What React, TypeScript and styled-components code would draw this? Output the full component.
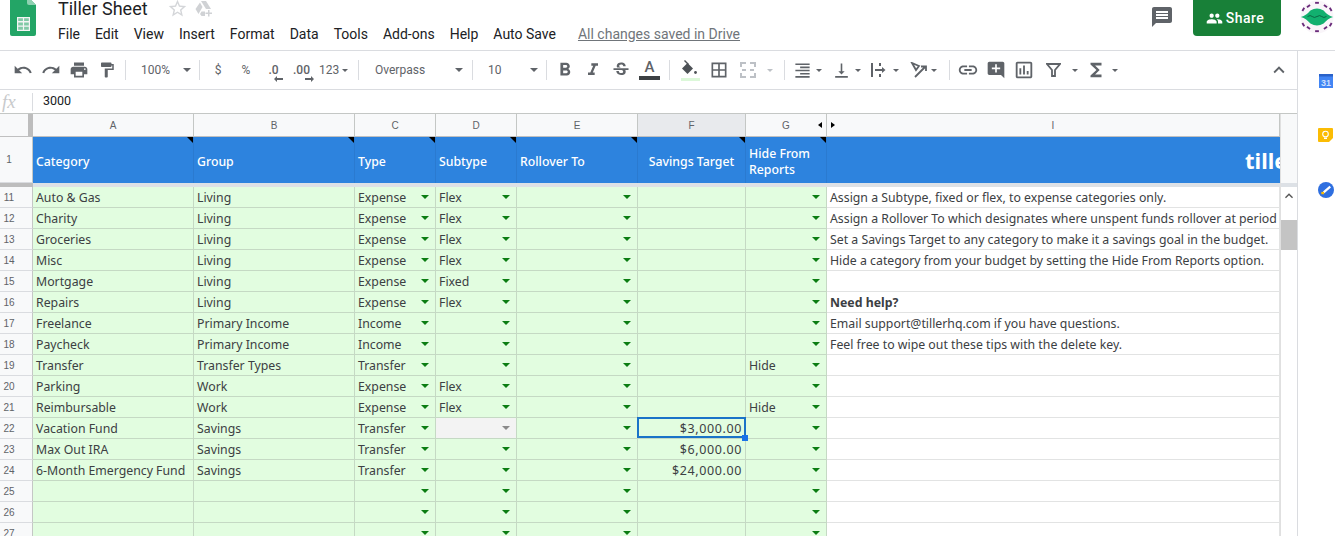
import React from "react";
import styled, { createGlobalStyle } from "styled-components";
import {
  MdUndo, MdRedo, MdPrint, MdFormatPaint, MdFormatBold, MdFormatItalic, MdStrikethroughS,
  MdBorderAll, MdLink, MdAddComment, MdFunctions, MdKeyboardArrowUp, MdMessage, MdOutlineAssessment,
  MdPeople, MdStarBorder, MdFormatAlignRight, MdVerticalAlignBottom,
} from "react-icons/md";

const Global = createGlobalStyle`
  html, body { margin: 0; padding: 0; background: #fff; }
  body { font-family: "Roboto", "Liberation Sans", sans-serif; color: #3c4043; }
`;

const COLS = "33px 161px 161px 81px 81px 121px 108px 81px 453px";
const CELL_FONT = `"Noto Sans", "Open Sans", sans-serif`;

type RowData = {
  n: number; cat?: string; group?: string; type?: string; sub?: string; target?: string; hide?: string;
  tip?: string; bold?: boolean; selected?: boolean;
};

const rows: RowData[] = [
  { n: 11, cat: "Auto & Gas", group: "Living", type: "Expense", sub: "Flex", tip: "Assign a Subtype, fixed or flex, to expense categories only." },
  { n: 12, cat: "Charity", group: "Living", type: "Expense", sub: "Flex", tip: "Assign a Rollover To which designates where unspent funds rollover at period end." },
  { n: 13, cat: "Groceries", group: "Living", type: "Expense", sub: "Flex", tip: "Set a Savings Target to any category to make it a savings goal in the budget." },
  { n: 14, cat: "Misc", group: "Living", type: "Expense", sub: "Flex", tip: "Hide a category from your budget by setting the Hide From Reports option." },
  { n: 15, cat: "Mortgage", group: "Living", type: "Expense", sub: "Fixed" },
  { n: 16, cat: "Repairs", group: "Living", type: "Expense", sub: "Flex", tip: "Need help?", bold: true },
  { n: 17, cat: "Freelance", group: "Primary Income", type: "Income", tip: "Email support@tillerhq.com if you have questions." },
  { n: 18, cat: "Paycheck", group: "Primary Income", type: "Income", tip: "Feel free to wipe out these tips with the delete key." },
  { n: 19, cat: "Transfer", group: "Transfer Types", type: "Transfer", hide: "Hide" },
  { n: 20, cat: "Parking", group: "Work", type: "Expense", sub: "Flex" },
  { n: 21, cat: "Reimbursable", group: "Work", type: "Expense", sub: "Flex", hide: "Hide" },
  { n: 22, cat: "Vacation Fund", group: "Savings", type: "Transfer", target: "$3,000.00", selected: true },
  { n: 23, cat: "Max Out IRA", group: "Savings", type: "Transfer", target: "$6,000.00" },
  { n: 24, cat: "6-Month Emergency Fund", group: "Savings", type: "Transfer", target: "$24,000.00" },
  { n: 25 },
  { n: 26 },
  { n: 27 },
];

const Page = styled.div`
  width: 1335px;
  height: 536px;
  overflow: hidden;
  display: flex;
  flex-direction: column;
`;

const TopBar = styled.header`
  height: 50px;
  flex: none;
  display: flex;
  align-items: flex-start;
  border-bottom: 1px solid #dadce0;
`;

const LogoWrap = styled.div`
  width: 58px;
  padding-left: 10px;
  box-sizing: border-box;
  flex: none;
  line-height: 0;
`;

const TitleBlock = styled.div`
  flex: 1;
  display: flex;
  flex-direction: column;
`;

const TitleRow = styled.div`
  height: 17px;
  display: flex;
  align-items: center;
  margin-bottom: 8px;
`;

const Title = styled.span`
  font-size: 18px;
  line-height: 17px;
  color: #202124;
  width: 109px;
`;

const TitleIcon = styled.span`
  color: #d4d6d9;
  width: 28px;
  display: flex;
  line-height: 0;
`;

const MenuRow = styled.nav`
  display: flex;
  align-items: center;
  height: 18px;
  font-size: 14px;
  color: #202124;
  gap: 15px;
`;

const SavedLink = styled.a`
  margin-left: 7px;
  color: #70757a;
  text-decoration: underline;
`;

const RightTools = styled.div`
  display: flex;
  align-items: flex-start;
  flex: none;
  padding-right: 1px;
`;

const CommentBtn = styled.span`
  color: #5f6368;
  display: flex;
  margin: 5px 19px 0 0;
`;

const ShareBtn = styled.div`
  width: 88px;
  height: 36px;
  box-sizing: border-box;
  padding-right: 4px;
  background: #188038;
  color: #fff;
  border-radius: 0 0 4px 4px;
  display: flex;
  align-items: center;
  justify-content: center;
  gap: 3px;
  font-size: 14px;
  font-weight: 500;
  letter-spacing: 0.5px;
  margin-right: 19px;
`;

const Avatar = styled.div`
  width: 34px;
  height: 36px;
  line-height: 0;
`;

const Body = styled.div`
  flex: 1;
  display: flex;
  min-height: 0;
`;

const Main = styled.main`
  width: 1297px;
  flex: none;
  display: flex;
  flex-direction: column;
`;

const SidePanel = styled.aside`
  flex: 1;
  border-left: 1px solid #dadce0;
  padding: 23px 0 0 20px;
  display: flex;
  flex-direction: column;
  gap: 40px;
`;

const Toolbar = styled.div`
  height: 38px;
  flex: none;
  display: flex;
  align-items: center;
  padding-left: 9px;
  border-bottom: 1px solid #dadce0;
  color: #5f6368;
`;

const ToolBtn = styled.span<{ $w?: number; $off?: boolean }>`
  width: ${(p) => p.$w ?? 28}px;
  height: 28px;
  flex: none;
  display: flex;
  align-items: center;
  justify-content: center;
  font-size: 12px;
  color: ${(p) => (p.$off ? "#bdc1c6" : "#5f6368")};
`;

const Sep = styled.span<{ $l?: number; $r?: number }>`
  width: 1px;
  height: 20px;
  background: #dadce0;
  flex: none;
  margin: 0 ${(p) => p.$r ?? 4}px 0 ${(p) => p.$l ?? 4}px;
`;

const Caret = styled.span<{ $off?: boolean }>`
  width: 0;
  height: 0;
  flex: none;
  border-left: 4px solid transparent;
  border-right: 4px solid transparent;
  border-top: 4px solid ${(p) => (p.$off ? "#bdc1c6" : "#5f6368")};
`;

const SmallCaret = styled(Caret)`
  border-left-width: 3.5px;
  border-right-width: 3.5px;
  border-top-width: 3.5px;
`;

const SelectBox = styled.span<{ $w: number; $l: number; $r: number }>`
  width: ${(p) => p.$w}px;
  padding: 0 ${(p) => p.$r}px 0 ${(p) => p.$l}px;
  box-sizing: border-box;
  flex: none;
  display: flex;
  align-items: center;
  justify-content: space-between;
  font-size: 12px;
  color: #5f6368;
`;

const IconMenu = styled.span<{ $gap: number; $pad: number }>`
  display: flex;
  align-items: center;
  gap: ${(p) => p.$gap}px;
  padding-left: ${(p) => p.$pad}px;
  box-sizing: border-box;
  width: 39px;
  flex: none;
`;

const Decimal = styled.span`
  position: relative;
  font-size: 12px;
  font-weight: 500;
`;

const DecimalArrow = styled.svg`
  position: absolute;
  right: -4px;
  bottom: -5px;
`;

const ColorBar = styled.span`
  display: flex;
  flex-direction: column;
  align-items: center;
  font-size: 15px;
  line-height: 14px;
  font-weight: 500;
  &::after {
    content: "";
    width: 21px;
    height: 4px;
    margin-top: 2px;
    background: #3c4043;
  }
`;

const Spacer = styled.span`
  flex: 1;
`;

const FormulaBar = styled.div`
  height: 23px;
  flex: none;
  display: flex;
  align-items: center;
  border-bottom: 1px solid #c4c7c5;
`;

const Fx = styled.span`
  width: 32px;
  padding-left: 2px;
  box-sizing: border-box;
  font-family: "Liberation Serif", serif;
  font-style: italic;
  font-size: 19px;
  color: #c8cacc;
`;

const FormulaValue = styled.span`
  height: 18px;
  box-sizing: border-box;
  padding: 0 0 2px 10px;
  border-left: 1px solid #dadce0;
  font-size: 12.5px;
  line-height: 16px;
  color: #202124;
`;

const SheetArea = styled.div`
  flex: 1;
  display: flex;
  min-height: 0;
`;

const Grid = styled.div`
  width: 1280px;
  flex: none;
  overflow: hidden;
  font-family: ${CELL_FONT};
`;

const Row = styled.div`
  display: grid;
  grid-template-columns: ${COLS};
`;

const ColLabel = styled.div<{ $active?: boolean }>`
  height: 23px;
  box-sizing: border-box;
  position: relative;
  display: flex;
  align-items: center;
  justify-content: center;
  font-family: "Liberation Sans", sans-serif;
  font-size: 10px;
  color: #5f6368;
  background: ${(p) => (p.$active ? "#e8eaed" : "#f8f9fa")};
  border-right: 1px solid #c4c7c5;
  border-bottom: 1px solid #c0c0c0;
`;

const Corner = styled.div`
  height: 23px;
  box-sizing: border-box;
  background: #f8f9fa;
  border-right: 5px solid #bdbdbd;
  border-bottom: 1px solid #c0c0c0;
`;

const HiddenArrow = styled.span<{ $dir: "left" | "right" }>`
  position: absolute;
  top: 8px;
  ${(p) => (p.$dir === "left" ? "right: 4px;" : "left: 4px;")}
  width: 0;
  height: 0;
  border-top: 3.5px solid transparent;
  border-bottom: 3.5px solid transparent;
  ${(p) => (p.$dir === "left" ? "border-right: 4px solid #000;" : "border-left: 4px solid #000;")}
`;

const RowNum = styled.div<{ $h: number }>`
  height: ${(p) => p.$h}px;
  box-sizing: border-box;
  background: #f8f9fa;
  border-right: 1px solid #c4c7c5;
  border-bottom: 1px solid #dadce0;
  padding-right: 14px;
  display: flex;
  align-items: center;
  justify-content: center;
  font-family: "Liberation Sans", sans-serif;
  font-size: 10px;
  color: #5f6368;
`;

const HeadCell = styled.div<{ $note?: boolean }>`
  height: 46px;
  box-sizing: border-box;
  position: relative;
  background: #2d83de;
  border-right: 1px solid #2a7ad0;
  padding: 3px 3px 0;
  display: flex;
  align-items: center;
  color: #fff;
  font-size: 12.3px;
  font-weight: 500;
  line-height: 16px;
  overflow: hidden;
  &::after {
    content: "";
    display: ${(p) => (p.$note ? "block" : "none")};
    position: absolute;
    top: 0;
    right: 0;
    border-top: 6px solid #000;
    border-left: 6px solid transparent;
  }
`;

const CenterHead = styled(HeadCell)`
  justify-content: center;
`;

const Brand = styled(HeadCell)`
  padding: 0 0 0 418px;
  font-size: 22px;
  font-weight: 700;
  white-space: nowrap;
  border-right: 0;
`;

const FreezeBar = styled.div`
  height: 4px;
  background: #dde1e6;
  display: grid;
  grid-template-columns: 33px 1fr;
  &::before {
    content: "";
    background: #bdbdbd;
  }
`;

const Cell = styled.div<{ $tone?: "green" | "gray" | "white"; $bold?: boolean }>`
  height: 21px;
  box-sizing: border-box;
  position: relative;
  padding: 0 3px;
  display: flex;
  align-items: center;
  justify-content: space-between;
  overflow: hidden;
  white-space: nowrap;
  font-size: 12.3px;
  font-weight: ${(p) => (p.$bold ? 700 : 400)};
  color: #3c4043;
  background: ${(p) => (p.$tone === "gray" ? "#f3f3f3" : p.$tone === "white" ? "#fff" : "#e2fde0")};
  border-right: 1px solid ${(p) => (p.$tone === "white" ? "#e2e3e3" : "#c5d9c4")};
  border-bottom: 1px solid ${(p) => (p.$tone === "white" ? "#e2e3e3" : "#c5d9c4")};
`;

const AmountCell = styled(Cell)`
  justify-content: flex-end;
  letter-spacing: 0.6px;
  font-size: 12.5px;
`;

const SelectedCell = styled(AmountCell)`
  overflow: visible;
  &::before {
    content: "";
    position: absolute;
    inset: -1px -1px 0 -1px;
    border: 2px solid #1a73c8;
  }
  &::after {
    content: "";
    position: absolute;
    right: -3px;
    bottom: -3px;
    width: 6px;
    height: 6px;
    background: #1a73e8;
    z-index: 1;
  }
`;

const DropArrow = styled.span<{ $gray?: boolean }>`
  width: 0;
  height: 0;
  flex: none;
  margin: 0 3px 0 auto;
  border-left: 4px solid transparent;
  border-right: 4px solid transparent;
  border-top: 4px solid ${(p) => (p.$gray ? "#8a8a8a" : "#0b7d12")};
`;

const Gutter = styled.div`
  flex: 1;
  display: flex;
  flex-direction: column;
  border-left: 1px solid #e0e0e0;
  box-sizing: border-box;
`;

const GutterTop = styled.div`
  height: 69px;
  background: #f8f9fa;
  flex: none;
`;

const GutterFreeze = styled.div`
  height: 4px;
  background: #dde1e6;
  flex: none;
`;

const ScrollUp = styled.div`
  height: 33px;
  flex: none;
  display: flex;
  align-items: center;
  justify-content: center;
  padding-bottom: 15px;
  box-sizing: border-box;
  color: #555;
`;

const ScrollThumb = styled.div`
  height: 30px;
  background: #c4c4c4;
  flex: none;
`;

function GoogleSheetsLogo() {
  return (
    <svg width="26" height="36" viewBox="0 0 26 36">
      <path d="M2 -4h15l9 9v29a2 2 0 0 1-2 2H2a2 2 0 0 1-2-2V-2a2 2 0 0 1 2-2z" fill="#23a566" />
      <path d="M17 -4l9 9h-7a2 2 0 0 1-2-2z" fill="#8ed1b1" />
      <rect x="7" y="17" width="13" height="14" fill="#f4f4f4" />
      <path d="M8.200 18.200h4.700v2.900H8.200z M14.100 18.200h4.700v2.900h-4.700z M8.200 22.500h4.700v2.900H8.200z M14.100 22.500h4.700v2.900h-4.700z M8.200 26.800h4.700v2.900H8.200z M14.100 26.800h4.700v2.900h-4.700z" fill="#23a566" opacity="0.55" />
    </svg>
  );
}

function DriveAdd() {
  return (
    <svg width="18" height="18" viewBox="0 0 18 18" fill="#d0d2d5">
      <path d="M6 1h5l5 8h-5z" />
      <path d="M5 2.500l2.500 4.500-4 7-3-5z" />
      <path d="M5 14l1.500-2.500H10V16H6.500z" />
      <path d="M13 10h1.500v2.500H17V14h-2.500v2.500H13V14h-2.500v-1.500H13z" />
    </svg>
  );
}

function PaintFill() {
  return (
    <svg width="22" height="24" viewBox="0 0 22 24">
      <path d="M8.500 5L14 10.500 8.500 16 3 10.500z" fill="#4d5156" />
      <path d="M5.500 2.500L9.500 6.500" stroke="#4d5156" strokeWidth="1.500" />
      <circle cx="16.500" cy="14.500" r="1.400" fill="#4d5156" />
      <rect x="2" y="20" width="19" height="3" fill="#dcf8d9" />
    </svg>
  );
}

function MergeIcon() {
  return (
    <svg width="16" height="16" viewBox="0 0 16 16" fill="none" stroke="#bdc1c6" strokeWidth="2">
      <path d="M1 5V1h5 M10 1h5v4 M1 11v4h5 M10 15h5v-4 M2 8h4 M10 8h4" />
    </svg>
  );
}

function WrapIcon() {
  return (
    <svg width="18" height="16" viewBox="0 0 18 16" fill="none" stroke="#5f6368" strokeWidth="2">
      <path d="M1 1v14 M9 1v3 M9 12v3 M4 8h9" />
      <path d="M11 5l3.500 3-3.500 3z" fill="#5f6368" stroke="none" />
    </svg>
  );
}

function RotateIcon() {
  return (
    <svg width="18" height="16" viewBox="0 0 18 16" fill="none" stroke="#5f6368" strokeWidth="1.800">
      <path d="M9 4L2 1l4 7z" />
      <path d="M5 15L15 5 M11 4.500h5V9" />
    </svg>
  );
}

function FilterIcon() {
  return (
    <svg width="15" height="14" viewBox="0 0 15 14" fill="none" stroke="#5f6368" strokeWidth="1.800">
      <path d="M1 1h13L9 7v6H6V7z" />
    </svg>
  );
}

function CalendarIcon() {
  return (
    <svg width="14" height="14" viewBox="0 0 14 14" style={{ marginLeft: 1 }}>
      <rect width="14" height="14" fill="#4285f4" />
      <rect width="14" height="2.500" fill="#2a62c9" />
      <text x="7" y="11.500" textAnchor="middle" fontSize="9" fontWeight="700" fill="#cfe0fc" fontFamily="Liberation Sans">31</text>
    </svg>
  );
}

function KeepIcon() {
  return (
    <svg width="15" height="14" viewBox="0 0 15 14">
      <path d="M0 1a1 1 0 0 1 1-1h13a1 1 0 0 1 1 1v9l-4 4H1a1 1 0 0 1-1-1z" fill="#fbbc04" />
      <circle cx="7.500" cy="6" r="2.800" fill="none" stroke="#fff" strokeWidth="1.100" />
      <rect x="6" y="9.500" width="3" height="1.500" fill="#fff" />
    </svg>
  );
}

function TasksIcon() {
  return (
    <svg width="16" height="16" viewBox="0 0 17 17">
      <circle cx="8.500" cy="8.500" r="8.500" fill="#2f6fe0" />
      <path d="M6 11L13 5" fill="none" stroke="#fff" strokeWidth="2.400" />
      <rect x="3.500" y="10.500" width="3" height="2.500" fill="#fbbc04" />
    </svg>
  );
}

function AvatarLogo() {
  const marks = [[18, 3, 0], [18, 33, 0], [9, 6.500, -35], [27, 6.500, 35], [9, 29.500, 35], [27, 29.500, -35], [3.500, 10, -60], [32.500, 10, 60], [3.500, 26, 60], [32.500, 26, -60]];
  return (
    <svg width="34" height="34" viewBox="0 0 36 36">
      <circle cx="18" cy="18" r="17.500" fill="#f9f5f9" />
      <path d="M1 18Q7 16 11 11Q18 7 25 11Q29 16 35 18Q29 20 25 25Q18 29 11 25Q7 20 1 18z" fill="#12b06f" />
      <path d="M8 17.500q3-2 5 0t5 0 5 0 5 0" fill="none" stroke="#0a5a3c" strokeWidth="0.900" />
      {marks.map(([x, y, r]) => (
        <rect key={`${x}-${y}`} x={x - 2} y={y - 1} width="4" height="2" fill="#6a2a7a" transform={`rotate(${r} ${x} ${y})`} />
      ))}
    </svg>
  );
}

function DataRow({ row }: { row: RowData }) {
  const TargetCell = row.selected ? SelectedCell : AmountCell;
  return (
    <Row>
      <RowNum $h={21}>{row.n}</RowNum>
      <Cell>{row.cat}</Cell>
      <Cell>{row.group}</Cell>
      <Cell>{row.type}<DropArrow /></Cell>
      <Cell $tone={row.selected ? "gray" : "green"}>{row.sub}<DropArrow $gray={row.selected} /></Cell>
      <Cell><DropArrow /></Cell>
      <TargetCell>{row.target}</TargetCell>
      <Cell>{row.hide}<DropArrow /></Cell>
      <Cell $tone="white" $bold={row.bold}>{row.tip}</Cell>
    </Row>
  );
}

export default function App() {
  return (
    <Page>
      <Global />
      <TopBar>
        <LogoWrap><GoogleSheetsLogo /></LogoWrap>
        <TitleBlock>
          <TitleRow>
            <Title>Tiller Sheet</Title>
            <TitleIcon><MdStarBorder size={21} /></TitleIcon>
            <TitleIcon><DriveAdd /></TitleIcon>
          </TitleRow>
          <MenuRow>
            {["File", "Edit", "View", "Insert", "Format", "Data", "Tools", "Add-ons", "Help", "Auto Save"].map((m) => (
              <span key={m}>{m}</span>
            ))}
            <SavedLink>All changes saved in Drive</SavedLink>
          </MenuRow>
        </TitleBlock>
        <RightTools>
          <CommentBtn><MdMessage size={24} /></CommentBtn>
          <ShareBtn><MdPeople size={17} />Share</ShareBtn>
          <Avatar><AvatarLogo /></Avatar>
        </RightTools>
      </TopBar>
      <Body>
        <Main>
          <Toolbar>
            <ToolBtn><MdUndo size={20} /></ToolBtn>
            <ToolBtn><MdRedo size={20} /></ToolBtn>
            <ToolBtn><MdPrint size={20} /></ToolBtn>
            <ToolBtn><MdFormatPaint size={18} /></ToolBtn>
            <Sep />
            <SelectBox $w={65} $l={11} $r={4}>100%<Caret /></SelectBox>
            <Sep />
            <ToolBtn $w={28}>$</ToolBtn>
            <ToolBtn $w={28}>%</ToolBtn>
            <ToolBtn $w={27}>
              <Decimal>.0<DecimalArrow width="9" height="6" viewBox="0 0 9 6"><path d="M0 3l3-3v2h6v2H3v2z" fill="#5f6368" /></DecimalArrow></Decimal>
            </ToolBtn>
            <ToolBtn $w={29}>
              <Decimal>.00<DecimalArrow width="9" height="6" viewBox="0 0 9 6"><path d="M9 3L6 0v2H0v2h6v2z" fill="#5f6368" /></DecimalArrow></Decimal>
            </ToolBtn>
            <SelectBox $w={38} $l={3} $r={6}>123<SmallCaret /></SelectBox>
            <Sep />
            <SelectBox $w={105} $l={12} $r={5}>Overpass<Caret /></SelectBox>
            <Sep />
            <SelectBox $w={65} $l={11} $r={4}>10<Caret /></SelectBox>
            <Sep />
            <ToolBtn><MdFormatBold size={22} /></ToolBtn>
            <ToolBtn><MdFormatItalic size={20} /></ToolBtn>
            <ToolBtn><MdStrikethroughS size={20} /></ToolBtn>
            <ToolBtn $w={29}><ColorBar>A</ColorBar></ToolBtn>
            <Sep $l={5} $r={5} />
            <ToolBtn $w={30}><PaintFill /></ToolBtn>
            <ToolBtn><MdBorderAll size={20} /></ToolBtn>
            <ToolBtn $w={30}><MergeIcon /></ToolBtn>
            <ToolBtn $w={14}><SmallCaret $off /></ToolBtn>
            <Sep $l={7} />
            <IconMenu $pad={4} $gap={4}><MdFormatAlignRight size={19} /><SmallCaret /></IconMenu>
            <IconMenu $pad={4} $gap={4}><MdVerticalAlignBottom size={19} /><SmallCaret /></IconMenu>
            <IconMenu $pad={4} $gap={4}><WrapIcon /><SmallCaret /></IconMenu>
            <IconMenu $pad={4} $gap={3}><RotateIcon /><SmallCaret /></IconMenu>
            <Sep />
            <ToolBtn><MdLink size={22} /></ToolBtn>
            <ToolBtn><MdAddComment size={20} /></ToolBtn>
            <ToolBtn><MdOutlineAssessment size={22} /></ToolBtn>
            <ToolBtn $w={30}><FilterIcon /></ToolBtn>
            <ToolBtn $w={14}><SmallCaret /></ToolBtn>
            <ToolBtn><MdFunctions size={22} /></ToolBtn>
            <ToolBtn $w={10}><SmallCaret /></ToolBtn>
            <Spacer />
            <ToolBtn $w={36}><MdKeyboardArrowUp size={22} /></ToolBtn>
          </Toolbar>
          <FormulaBar>
            <Fx>fx</Fx>
            <FormulaValue>3000</FormulaValue>
          </FormulaBar>
          <SheetArea>
            <Grid>
              <Row>
                <Corner />
                <ColLabel>A</ColLabel>
                <ColLabel>B</ColLabel>
                <ColLabel>C</ColLabel>
                <ColLabel>D</ColLabel>
                <ColLabel>E</ColLabel>
                <ColLabel $active>F</ColLabel>
                <ColLabel>G<HiddenArrow $dir="left" /></ColLabel>
                <ColLabel><HiddenArrow $dir="right" />I</ColLabel>
              </Row>
              <Row>
                <RowNum $h={46}>1</RowNum>
                <HeadCell $note>Category</HeadCell>
                <HeadCell $note>Group</HeadCell>
                <HeadCell $note>Type</HeadCell>
                <HeadCell $note>Subtype</HeadCell>
                <HeadCell $note>Rollover To</HeadCell>
                <CenterHead $note>Savings Target</CenterHead>
                <HeadCell $note>Hide From Reports</HeadCell>
                <Brand>tiller</Brand>
              </Row>
              <FreezeBar />
              {rows.map((r) => (
                <DataRow key={r.n} row={r} />
              ))}
            </Grid>
            <Gutter>
              <GutterTop />
              <GutterFreeze />
              <ScrollUp><MdKeyboardArrowUp size={16} /></ScrollUp>
              <ScrollThumb />
            </Gutter>
          </SheetArea>
        </Main>
        <SidePanel>
          <CalendarIcon />
          <KeepIcon />
          <TasksIcon />
        </SidePanel>
      </Body>
    </Page>
  );
}
